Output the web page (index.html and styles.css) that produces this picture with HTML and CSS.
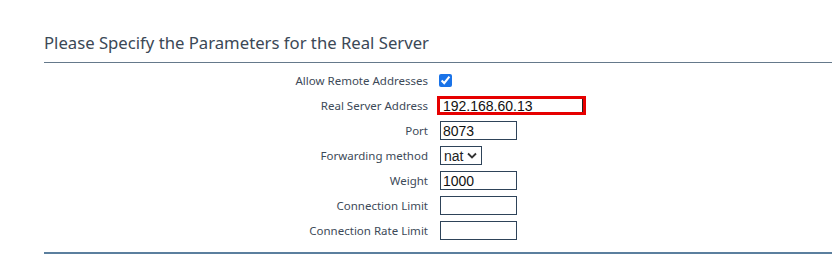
FILE: index.html
```html
<!DOCTYPE html>
<html lang="en">
<head>
    <meta charset="UTF-8">
    <title>Real Server Parameters</title>
    <link rel="stylesheet" href="styles.css">
</head>
<body>
    <div class="section">
        <h2 class="section-title">Please Specify the Parameters for the Real Server</h2>

        <form class="params">
            <label for="remote">Allow Remote Addresses</label>
            <div class="field"><input type="checkbox" id="remote" checked></div>

            <label for="address">Real Server Address</label>
            <div class="field"><input type="text" id="address" class="highlight" value="192.168.60.13"></div>

            <label for="port">Port</label>
            <div class="field"><input type="text" id="port" value="8073"></div>

            <label for="method">Forwarding method</label>
            <div class="field">
                <span class="select-wrap">
                    <select id="method">
                        <option>nat</option>
                        <option>route</option>
                    </select>
                    <svg class="chevron" width="10" height="7" viewBox="0 0 10 7">
                        <path d="M1 1.5 L5 5.5 L9 1.5" fill="none" stroke="#333" stroke-width="1.8"/>
                    </svg>
                </span>
            </div>

            <label for="weight">Weight</label>
            <div class="field"><input type="text" id="weight" value="1000"></div>

            <label for="limit">Connection Limit</label>
            <div class="field"><input type="text" id="limit"></div>

            <label for="rate">Connection Rate Limit</label>
            <div class="field"><input type="text" id="rate"></div>
        </form>
    </div>
</body>
</html>
```

FILE: styles.css
```css
body {
    margin: 0;
    font-family: "Noto Sans", sans-serif;
    background: #fff;
}
.section {
    margin-left: 44px;
    padding-top: 31px;
}
.section-title {
    margin: 0;
    padding-bottom: 8px;
    font-size: 16.7px;
    font-weight: normal;
    line-height: 23px;
    color: #3b4856;
    border-bottom: 1px solid #65798b;
}
.params {
    display: grid;
    grid-template-columns: 384px auto;
    grid-auto-rows: 25px;
    column-gap: 12px;
    align-items: center;
    margin-top: 5px;
    padding-bottom: 9px;
    border-bottom: 2px solid #5b7f9e;
}
.params label {
    text-align: right;
    font-size: 11.5px;
    color: #3d4a58;
}
.field {
    display: flex;
    align-items: center;
}
.field input[type="text"] {
    box-sizing: border-box;
    width: 77px;
    height: 19px;
    padding: 0 2px;
    border: 1px solid #2e4359;
    font-family: "Liberation Sans", Arial, sans-serif;
    font-size: 14px;
    color: #111;
}
.field input[type="checkbox"] {
    width: 13px;
    height: 13px;
    margin: 0 0 0 -1px;
    accent-color: #1a73e8;
}
.field input.highlight {
    width: 149px;
    height: 19px;
    margin-left: -3px;
    padding-left: 3px;
    border: 3px solid #e60000;
    box-shadow: inset -1px 0 0 #222;
}
.select-wrap {
    position: relative;
    display: inline-flex;
}
.select-wrap select {
    appearance: none;
    -webkit-appearance: none;
    width: 42px;
    height: 19px;
    padding: 0 0 0 3px;
    border: 1px solid #2e4359;
    border-radius: 0;
    font-family: "Liberation Sans", Arial, sans-serif;
    font-size: 14px;
    color: #222;
    background: #fff;
}
.chevron {
    position: absolute;
    right: 5px;
    top: 6px;
    pointer-events: none;
}
```
